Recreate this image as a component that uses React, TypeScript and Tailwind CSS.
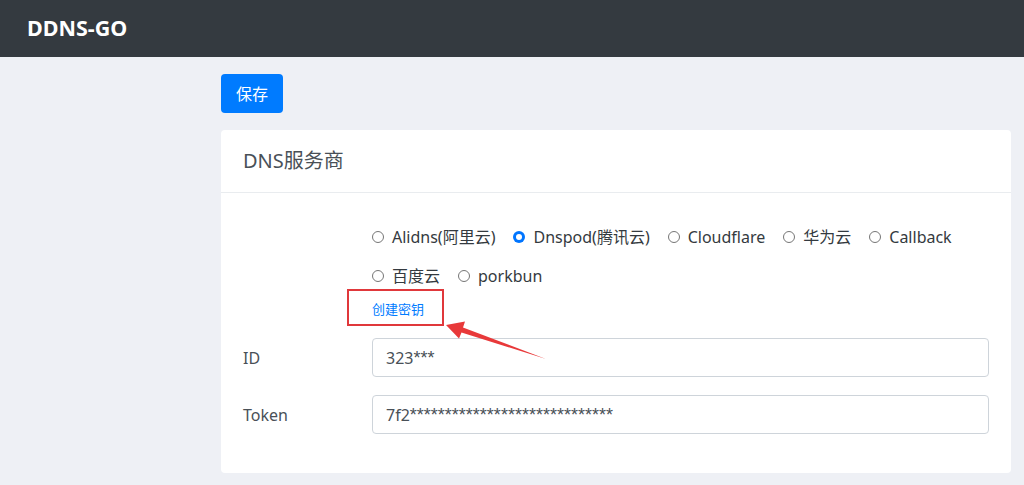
import { useState } from 'react'

const PROVIDERS = [
  'Alidns(阿里云)',
  'Dnspod(腾讯云)',
  'Cloudflare',
  '华为云',
  'Callback',
  '百度云',
  'porkbun',
]

function Radio({ checked }: { checked: boolean }) {
  return checked ? (
    <span className="w-[12px] h-[12px] rounded-full bg-[#0075ff] flex items-center justify-center shrink-0">
      <span className="w-[6px] h-[6px] rounded-full bg-white" />
    </span>
  ) : (
    <span className="w-[12px] h-[12px] rounded-full border border-[#767676] bg-white shrink-0" />
  )
}

function Field({ label, value }: { label: string; value: string }) {
  const head = value.replace(/\*+$/, '')
  const stars = value.slice(head.length)
  return (
    <div className="flex items-center">
      <label className="w-[129px] shrink-0 text-[16px]">{label}</label>
      <div className="flex-1 h-[39px] border border-[#ced4da] rounded-[4px] px-[13px] flex items-center text-[16px] text-[#495057] bg-white">
        <span>{head}</span>
        <span className="text-[18px] leading-none" style={{ fontFamily: '"Liberation Sans", sans-serif' }}>
          {stars}
        </span>
      </div>
    </div>
  )
}

export default function App() {
  const [provider, setProvider] = useState('Dnspod(腾讯云)')

  return (
    <div
      className="relative min-h-[485px] bg-[#eef0f5] text-[#495057]"
      style={{ fontFamily: '"Noto Sans", "Noto Sans CJK SC", sans-serif' }}
    >
      <header className="h-[57px] bg-[#343a40] flex items-center pl-[27px]">
        <span className="text-white text-[21.5px] font-bold">DDNS-GO</span>
      </header>

      <main className="pl-[221px] pr-[13px] pt-[17px]">
        <button className="h-[39px] w-[62px] rounded-[4px] bg-[#007bff] text-white text-[16px]">保存</button>

        <section className="mt-[17px] bg-white rounded-[4px]">
          <div className="h-[63px] flex items-center px-[22px] border-b border-[#e9ecef]">
            <h2 className="text-[20px] text-[#495057]">DNS服务商</h2>
          </div>

          <div className="px-[22px] pt-[24px] pb-[39px]">
            <div className="flex">
              <div className="w-[129px] shrink-0" />
              <div className="flex-1">
                <div className="flex flex-wrap gap-x-[18px] w-[600px]">
                  {PROVIDERS.map((p) => (
                    <label
                      key={p}
                      onClick={() => setProvider(p)}
                      className="h-[39px] flex items-center gap-[8px] text-[16px] text-[#343a40] cursor-pointer"
                    >
                      <Radio checked={provider === p} />
                      <span>{p}</span>
                    </label>
                  ))}
                </div>
                <div className="relative h-[30px] flex items-center">
                  <a className="text-[13px] text-[#007bff]">创建密钥</a>
                  <span className="absolute left-[-25px] top-[-6px] w-[97px] h-[37px] border-2 border-[#e0383b]" />
                </div>
              </div>
            </div>

            <div className="mt-[13px]">
              <Field label="ID" value="323***" />
            </div>
            <div className="mt-[18px]">
              <Field label="Token" value="7f2*****************************" />
            </div>
          </div>
        </section>
      </main>

      <svg className="absolute left-0 top-0 pointer-events-none" width="1024" height="485">
        <path
          d="M446 325 L465 321.5 L463 327.5 L546 359 L461.5 332.5 L459 338.5 Z"
          fill="#e8393a"
        />
      </svg>
    </div>
  )
}
